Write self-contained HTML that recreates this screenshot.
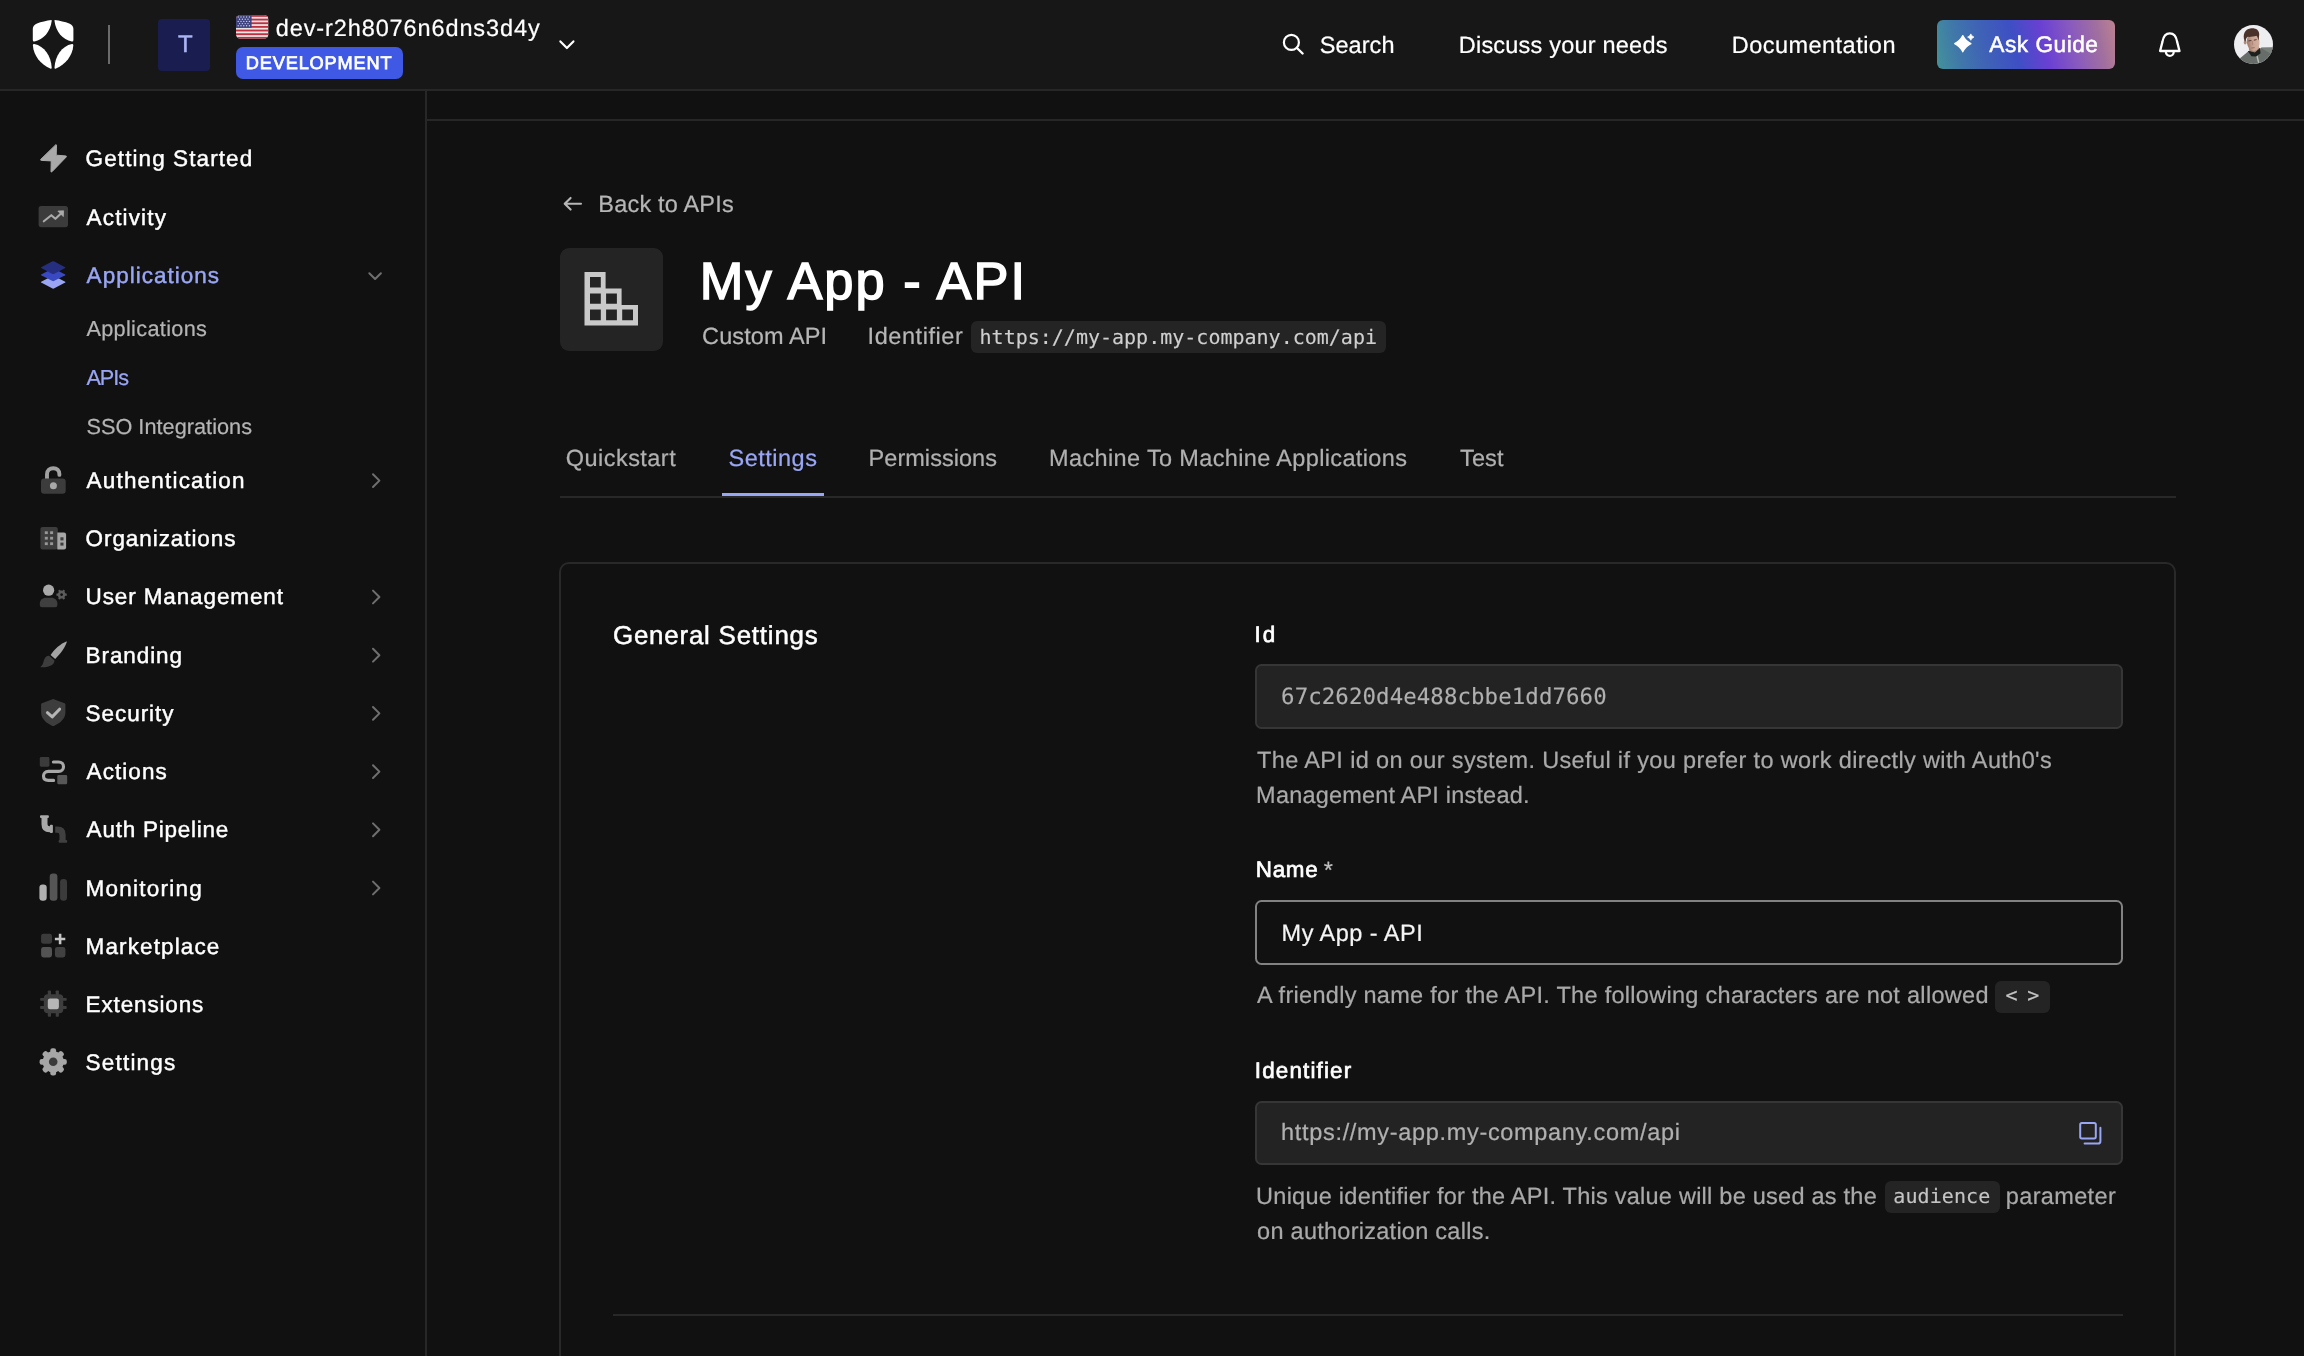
<!DOCTYPE html>
<html lang="en">
<head>
<meta charset="utf-8">
<title>My App - API</title>
<style>
*{box-sizing:border-box;margin:0;padding:0}
html,body{width:2304px;height:1356px;overflow:hidden;background:#111111;color:#fff;font-family:"Liberation Sans",sans-serif}
body{position:relative}
.b{position:absolute}
.t{position:absolute;white-space:nowrap}
svg{position:absolute;overflow:visible}
#hdr{left:0;top:0;width:2304px;height:89px;background:#171717}
#hdrline{left:0;top:89px;width:2304px;height:2px;background:#272727}
#sideline{left:425px;top:91px;width:2px;height:1265px;background:#272727}
#subline{left:427px;top:119px;width:1877px;height:2px;background:#272727}
.chip{background:#242424;border-radius:6px}
.inp{left:1255px;width:868px;height:65px;border-radius:6.5px}
.dis{background:#232323;border:2px solid #363636}
</style>
</head>
<body>
<!-- header -->
<div class="b" id="hdr"></div>
<div class="b" id="hdrline"></div>
<div class="b" id="sideline"></div>
<div class="b" id="subline"></div>

<!-- logo -->
<svg style="left:0;top:0" width="120" height="89" viewBox="0 0 120 89">
 <g fill="#ffffff">
  <path d="M51.6 19.9 C46.5 20.5 41 21.8 37 23.4 Q32.8 25.2 32.8 28.8 L32.8 40 Q32.8 41.8 34.4 41.5 C43.5 39.9 50.3 32 51.7 21.1 Z"/>
  <path d="M54.6 19.9 C59.7 20.5 65.2 21.8 69.2 23.4 Q73.4 25.2 73.4 28.8 L73.4 40 Q73.4 41.8 71.8 41.5 C62.7 39.9 55.9 32 54.5 21.1 Z"/>
  <path d="M34.2 44 Q32.8 43.8 32.9 45.4 C33.6 55.4 40.5 64 50.2 68.6 Q51.8 69.3 51.7 67.4 C51 56 44.5 46 34.2 44 Z"/>
  <path d="M72 44 Q73.4 43.8 73.3 45.4 C72.6 55.4 65.7 64 56 68.6 Q54.4 69.3 54.5 67.4 C55.2 56 61.7 46 72 44 Z"/>
 </g>
</svg>
<div class="b" style="left:108px;top:25px;width:2px;height:39px;background:#6b6b6b"></div>
<div class="b" style="left:158px;top:18.5px;width:52px;height:52px;border-radius:4px;background:#191d50"></div>
<!-- flag -->
<svg style="left:236px;top:15px" width="32.5" height="23.75" viewBox="0 0 32.5 23.75">
 <defs><clipPath id="fc"><rect x="0" y="0" width="32.5" height="23.75" rx="4.5"/></clipPath></defs>
 <g clip-path="url(#fc)">
  <rect width="32.5" height="23.75" fill="#e6e3e3"/>
  <g fill="#c02f40">
   <rect y="0" width="32.5" height="1.83"/><rect y="3.65" width="32.5" height="1.83"/><rect y="7.3" width="32.5" height="1.83"/>
   <rect y="10.96" width="32.5" height="1.83"/><rect y="14.6" width="32.5" height="1.83"/><rect y="18.27" width="32.5" height="1.83"/><rect y="21.92" width="32.5" height="1.83"/>
  </g>
  <rect width="15.6" height="12.8" fill="#40447f"/>
  <g fill="#c9cbe0">
   <circle cx="2.2" cy="2" r=".7"/><circle cx="5" cy="2" r=".7"/><circle cx="7.8" cy="2" r=".7"/><circle cx="10.6" cy="2" r=".7"/><circle cx="13.4" cy="2" r=".7"/>
   <circle cx="3.6" cy="4.2" r=".7"/><circle cx="6.4" cy="4.2" r=".7"/><circle cx="9.2" cy="4.2" r=".7"/><circle cx="12" cy="4.2" r=".7"/>
   <circle cx="2.2" cy="6.4" r=".7"/><circle cx="5" cy="6.4" r=".7"/><circle cx="7.8" cy="6.4" r=".7"/><circle cx="10.6" cy="6.4" r=".7"/><circle cx="13.4" cy="6.4" r=".7"/>
   <circle cx="3.6" cy="8.6" r=".7"/><circle cx="6.4" cy="8.6" r=".7"/><circle cx="9.2" cy="8.6" r=".7"/><circle cx="12" cy="8.6" r=".7"/>
   <circle cx="2.2" cy="10.8" r=".7"/><circle cx="5" cy="10.8" r=".7"/><circle cx="7.8" cy="10.8" r=".7"/><circle cx="10.6" cy="10.8" r=".7"/><circle cx="13.4" cy="10.8" r=".7"/>
  </g>
 </g>
</svg>
<div class="b" style="left:236px;top:47px;width:167.4px;height:32px;border-radius:7px;background:#3f59e4"></div>
<svg style="left:557px;top:38px" width="20" height="14" viewBox="557 38 20 14"><path d="M560.4 41.4 L566.9 48 L573.4 41.4" fill="none" stroke="#fff" stroke-width="2.2" stroke-linecap="round" stroke-linejoin="round"/></svg>
<!-- search icon -->
<svg style="left:1280px;top:31px" width="26" height="26" viewBox="1280 31 26 26"><circle cx="1291.4" cy="42.4" r="7.5" fill="none" stroke="#fff" stroke-width="2.2"/><path d="M1297 48 L1302.6 53.5" stroke="#fff" stroke-width="2.4" stroke-linecap="round"/></svg>
<!-- ask guide -->
<div class="b" style="left:1937px;top:20px;width:178px;height:49px;border-radius:6px;background:linear-gradient(78deg,#43939a 0%,#4078a9 13%,#3f62b6 27%,#3e4fc4 44%,#6a40d3 60%,#8a5bbd 76%,#a2709d 90%,#bd8390 100%)"></div>
<svg style="left:1950px;top:30px" width="28" height="26" viewBox="1950 30 28 26"><path d="M1962.8 35.6 Q1965.5 41.0 1970.8999999999999 43.7 Q1965.5 46.400000000000006 1962.8 51.800000000000004 Q1960.1 46.400000000000006 1954.7 43.7 Q1960.1 41.0 1962.8 35.6 Z" fill="#fff" stroke="#fff" stroke-width="1.3" stroke-linejoin="round"/><path d="M1970.8 33.9 Q1971.6 36.300000000000004 1974.0 37.1 Q1971.6 37.9 1970.8 40.300000000000004 Q1970.0 37.9 1967.6 37.1 Q1970.0 36.300000000000004 1970.8 33.9 Z" fill="#fff" stroke="#fff" stroke-width=".7" stroke-linejoin="round"/></svg>
<!-- bell -->
<svg style="left:2154px;top:28px" width="32" height="32" viewBox="2154 28 32 32"><path d="M2160.1 51 L2162.5 41.6 C2163.4 36.4 2166 33.4 2169.8 33.4 C2173.6 33.4 2176.2 36.4 2177.1 41.6 L2179.5 51 Z" fill="none" stroke="#fff" stroke-width="2.3" stroke-linejoin="round"/><path d="M2165.9 51.9 A3.9 3.9 0 0 0 2173.7 51.9" fill="none" stroke="#fff" stroke-width="2.2"/></svg>
<!-- avatar -->
<svg style="left:2234.4px;top:24.8px" width="39" height="39" viewBox="0 0 39 39">
 <defs><clipPath id="av"><circle cx="19.5" cy="19.5" r="19.5"/></clipPath>
 <linearGradient id="fg" x1="0" y1="0" x2="1" y2="0"><stop offset="0" stop-color="#9c7768"/><stop offset=".45" stop-color="#c9a392"/><stop offset="1" stop-color="#d3b0a0"/></linearGradient></defs>
 <g clip-path="url(#av)">
  <rect width="39" height="39" fill="#eeedf0"/>
  <path d="M4.5 34.5 L15 25.8 L21 27.5 L27.5 22.6 L39 22.4 V39 H4 Z" fill="#676d68"/>
  <path d="M27 23 L39 22.4 V30 Z" fill="#7a807b"/>
  <path d="M13.8 26 L17.4 31.2 L22.2 31.6 L26.6 28.2 L25.8 22.8 L21.4 26.6 Z" fill="#1d211e"/>
  <path d="M22.4 31.4 L24 38 L25.4 37.6 L23.6 30.6 Z" fill="#b9beb9"/>
  <path d="M14.2 19 L15.2 25.8 L20.8 27.6 L24.8 24 L24.6 18 Z" fill="#a47e6f"/>
  <ellipse cx="19.2" cy="17" rx="6.3" ry="9" transform="rotate(-8 19.2 17)" fill="url(#fg)"/>
  <ellipse cx="11.2" cy="17.2" rx="1.4" ry="2.2" fill="#b28a7b"/>
  <path d="M10.6 16 C8.2 9 11.2 4.4 16.2 3.5 C20.8 2.6 25.4 4.6 25.2 9.4 C25.1 11.6 24.6 13 24.9 15.4 C23.6 13.4 23.6 11.6 22.4 10.8 C19.8 11.4 16 12.2 13.8 11.8 C12.4 12.6 11.8 14.2 11.6 16.6 Z" fill="#4a312a"/>
  <path d="M14.4 15.9 L17.4 15.5 M19.8 15.2 L22.6 14.6" stroke="#5a3d33" stroke-width="1"/>
  <path d="M17.4 23 L20.6 22.6" stroke="#8f6557" stroke-width=".8"/>
  <path d="M18.2 16 L18.8 20.2" stroke="#a98070" stroke-width=".9"/>
 </g>
</svg>

<!--SIDE_START-->
<!-- sidebar icons: one svg in page coordinates -->
<svg style="left:0;top:91px" width="425" height="1100" viewBox="0 91 425 1100">
 <!-- getting started bolt -->
 <path d="M55.6 144.9 L40.7 159.4 Q40.3 160.3 41.4 160.4 L51.2 160.9 L51 171.6 Q51.2 172.5 52 171.7 L66.3 156.9 Q66.8 156 65.7 155.9 L56.2 155.2 L56.5 145.2 Q56.3 144.3 55.6 144.9 Z" fill="#a9a9a9" stroke="#a9a9a9" stroke-width="1" stroke-linejoin="round"/>
 <!-- activity -->
 <rect x="38.6" y="205.9" width="29.4" height="21.3" rx="2.6" fill="#3b3b3b"/>
 <path d="M43.8 221.3 L51.3 215.2 L55.4 218.8 L61.6 213" fill="none" stroke="#ababab" stroke-width="2.1" stroke-linecap="round" stroke-linejoin="round"/>
 <path d="M57.9 211.1 L63.6 210.8 L63.3 216.6 Z" fill="#ababab" stroke="#ababab" stroke-width=".8" stroke-linejoin="round"/>
 <!-- applications (stack) -->
 <path d="M53.2 275.6 L65.2 281.8 Q65.9 282.2 65.2 282.6 L53.9 288.5 Q53.2 288.8 52.5 288.5 L41.2 282.6 Q40.5 282.2 41.2 281.8 Z" fill="#9aa6f3"/>
 <path d="M53.2 268.2 L65.2 274.4 Q65.9 274.8 65.2 275.2 L53.9 281.1 Q53.2 281.4 52.5 281.1 L41.2 275.2 Q40.5 274.8 41.2 274.4 Z" fill="#3949c1"/>
 <path d="M52.5 261.3 Q53.2 261 53.9 261.3 L65.2 267.2 Q65.9 267.6 65.2 268 L53.9 273.9 Q53.2 274.2 52.5 273.9 L41.2 268 Q40.5 267.6 41.2 267.2 Z" fill="#252e7f"/>
 <path d="M369.3 273.3 L375.1 279 L380.9 273.3" fill="none" stroke="#6f6f6f" stroke-width="2" stroke-linecap="round" stroke-linejoin="round"/>
 <!-- authentication lock -->
 <path d="M47 480 V474.3 C47 470.3 49.8 468.2 53.3 468.2 C56.8 468.2 59.4 470.3 59.4 474.3 V474.9" fill="none" stroke="#a1a1a1" stroke-width="3.9" stroke-linecap="round"/>
 <rect x="41" y="478.5" width="24.7" height="15.3" rx="3" fill="#3c3c3c"/>
 <circle cx="53.4" cy="485.8" r="3.5" fill="#a8a8a8"/>
 <!-- organizations -->
 <rect x="40.4" y="526.9" width="17.4" height="22.6" rx="2.2" fill="#3d3d3d"/>
 <g fill="#979797">
  <rect x="44.8" y="531.3" width="3" height="2.8"/><rect x="50.1" y="531.3" width="3" height="2.8"/>
  <rect x="44.8" y="536.8" width="3" height="2.8"/><rect x="50.1" y="536.8" width="3" height="2.8"/>
  <rect x="44.8" y="542.3" width="3" height="2.8"/><rect x="50.1" y="542.3" width="3" height="2.8"/>
 </g>
 <path d="M57.3 532.6 H64 Q66.1 532.6 66.1 534.7 V547.4 Q66.1 549.5 64 549.5 H57.3 Z" fill="#a6a6a6"/>
 <rect x="60.4" y="537.3" width="3.1" height="3.1" fill="#3d3d3d"/><rect x="60.4" y="542.6" width="3.1" height="3" fill="#3d3d3d"/>
 <!-- user management -->
 <circle cx="48.6" cy="590.2" r="5.6" fill="#a9a9a9"/>
 <path d="M39.8 604 C39.8 600 42.5 597.8 46 597.8 H51.2 C54.7 597.8 57.4 600 57.4 604 V605 Q57.4 607.2 55.2 607.2 H42 Q39.8 607.2 39.8 605 Z" fill="#3f3f3f"/>
 <g transform="translate(61.6 594.6) rotate(30)" fill="#5c5c5c"><circle r="3.8"/><g id="gt"><rect x="-1.1" y="-5.2" width="2.2" height="10.4" rx=".5"/></g><use href="#gt" transform="rotate(60)"/><use href="#gt" transform="rotate(120)"/><circle r="1.4" fill="#111111"/></g>
 <!-- branding brush -->
 <path d="M66.3 641.5 Q67.1 641.2 66.8 642.1 C65.2 647.2 60.2 654.5 55.2 658.9 L50.6 655 C54.2 649.4 61 643.4 66.3 641.5 Z" fill="#a4a4a4"/>
 <path d="M49.2 655.8 L54.4 660.3 C54.8 664.5 50 667.6 41 667.3 Q40 667.2 40.8 666.5 C44 664.4 43.2 659.2 46 656.8 Q47.5 655.5 49.2 655.8 Z" fill="#3d3d3d"/>
 <!-- security -->
 <path d="M53.2 699.1 L64.6 703.3 Q65.4 703.6 65.4 704.5 V712.5 C65.4 718.8 60 723.3 53.9 725.9 Q53.2 726.2 52.5 725.9 C46.4 723.3 41.1 718.8 41.1 712.5 V704.5 Q41.1 703.6 41.9 703.3 Z" fill="#3d3d3d"/>
 <path d="M47.4 712.7 L52.2 716.9 L59.6 709.2" fill="none" stroke="#b6b6b6" stroke-width="3" stroke-linecap="round" stroke-linejoin="round"/>
 <!-- actions -->
 <rect x="39.8" y="757" width="9.6" height="9.7" rx="1.4" fill="#3b3b3b"/>
 <rect x="57.3" y="775" width="9.9" height="9.3" rx="1.4" fill="#575757"/>
 <path d="M53.4 762 H58.6 C61.8 762 63.5 764.1 63.5 766.7 C63.5 769.3 61.8 771.4 58.6 771.4 H48.4 C45.2 771.4 43.5 773.5 43.5 776.1 C43.5 778.7 45.2 780.4 48.4 780.4 H53.6" fill="none" stroke="#a8a8a8" stroke-width="3.1" stroke-linecap="round"/>
 <!-- auth pipeline -->
 <path d="M44.5 817 V824.2 Q44.5 829.3 49.6 829.3 H51" fill="none" stroke="#a9a9a9" stroke-width="6"/>
 <rect x="40" y="815.2" width="8.9" height="2.9" rx="1" fill="#a9a9a9"/>
 <rect x="49.9" y="824.8" width="3" height="8.2" rx="1" fill="#a9a9a9"/>
 <path d="M55.2 829.7 H57.4 Q62.55 829.7 62.55 834.9 V840.6" fill="none" stroke="#404040" stroke-width="6.2"/>
 <rect x="58.6" y="840" width="8.6" height="2.7" rx="1" fill="#404040"/>
 <!-- monitoring -->
 <rect x="39.4" y="884.4" width="7.3" height="16.4" rx="3.2" fill="#b1b1b1"/>
 <rect x="49.7" y="873.5" width="7.7" height="27.3" rx="3.2" fill="#555555"/>
 <rect x="60.1" y="879" width="6.9" height="21.8" rx="3.2" fill="#3b3b3b"/>
 <!-- marketplace -->
 <rect x="41.1" y="933.7" width="10.9" height="10.1" rx="2.4" fill="#3b3b3b"/>
 <rect x="41.1" y="947.1" width="10.9" height="10.4" rx="2.4" fill="#535353"/>
 <rect x="54.9" y="947.1" width="10.5" height="10.4" rx="2.4" fill="#414141"/>
 <path d="M54.9 939 H65.3 M60.1 933.8 V944.2" stroke="#c6c6c6" stroke-width="2.6"/>
 <!-- extensions -->
 <g fill="#3e3e3e">
  <rect x="43.8" y="994.2" width="19.5" height="19" rx="4"/>
  <rect x="47.8" y="990.4" width="3.2" height="26.4" rx=".8"/><rect x="55.7" y="990.4" width="3.2" height="26.4" rx=".8"/>
  <rect x="40.1" y="997.9" width="26.6" height="2.9" rx=".8"/><rect x="40.1" y="1006" width="26.6" height="3" rx=".8"/>
 </g>
 <rect x="47.8" y="998.5" width="11.1" height="10.7" rx="2.2" fill="#b6b6b6"/>
 <!-- settings gear -->
 <g transform="translate(53.2 1061.8)"><g fill="#a6a6a6"><circle r="10.6"/><g id="st"><rect x="-2.9" y="-13.6" width="5.8" height="27.2" rx="2.2"/></g><use href="#st" transform="rotate(45)"/><use href="#st" transform="rotate(90)"/><use href="#st" transform="rotate(135)"/></g><circle r="4.3" fill="#3a3a3a"/></g>
 <!-- chevrons right -->
 <g fill="none" stroke="#6f6f6f" stroke-width="2" stroke-linecap="round" stroke-linejoin="round">
  <path id="cr" d="M373 474.2 L379.4 480.6 L373 487"/>
  <use href="#cr" y="116.4"/><use href="#cr" y="174.6"/><use href="#cr" y="232.8"/><use href="#cr" y="291"/><use href="#cr" y="349.2"/><use href="#cr" y="407.4"/>
 </g>
</svg>
<!--SIDE_END-->
<!--MAIN_START-->
<!-- main -->
<svg style="left:560px;top:194px" width="26" height="20" viewBox="560 194 26 20"><path d="M581 203.75 L565 203.75 M570.6 197.9 L564.7 203.75 L570.6 209.6" fill="none" stroke="#b6b6b6" stroke-width="2.1" stroke-linecap="round" stroke-linejoin="round"/></svg>
<div class="b" style="left:559.5px;top:247.5px;width:103.5px;height:103px;border-radius:9px;background:#242424"></div>
<svg style="left:580px;top:268px" width="62" height="62" viewBox="580 268 62 62"><path fill="#c9c9c9" fill-rule="evenodd" d="M584.5 272 H605.6 V288.6 H621.6 V304.9 H638 V325.5 H584.5 Z M590 277 V287.4 H600.8 V277 Z M590 293.4 V303.8 H600.8 V293.4 Z M606.1 293.4 V303.8 H616.9 V293.4 Z M590 309.6 V320.2 H600.8 V309.6 Z M606.1 309.6 V320.2 H616.9 V309.6 Z M622.2 309.6 V320.2 H633 V309.6 Z"/></svg>
<div class="b chip" style="left:970.5px;top:321.25px;width:415.5px;height:31.75px"></div>
<div class="b" style="left:559.5px;top:496px;width:1616.5px;height:2px;background:#282828"></div>
<div class="b" style="left:722px;top:493px;width:101.75px;height:3.2px;background:#99a6f4"></div>
<div class="b" style="left:559px;top:562px;width:1617px;height:830px;border:2px solid #292929;border-radius:10px"></div>
<div class="b inp dis" style="top:664px"></div>
<div class="b inp" style="top:900px;border:2px solid #828282;background:#111111"></div>
<div class="b inp dis" style="top:1101px;height:64px"></div>
<div class="b chip" style="left:1995px;top:980.5px;width:55px;height:32px"></div>
<div class="b chip" style="left:1884.75px;top:1180.75px;width:115px;height:31.75px"></div>
<svg style="left:2076px;top:1119px" width="30" height="30" viewBox="2076 1119 30 30"><rect x="2080.2" y="1123" width="15.6" height="15.4" rx="1.6" fill="none" stroke="#99a6f4" stroke-width="2"/><path d="M2100.4 1127.8 V1141.2 Q2100.4 1143.6 2098 1143.6 H2084.6" fill="none" stroke="#99a6f4" stroke-width="2" stroke-linecap="round"/></svg>
<div class="b" style="left:613px;top:1314px;width:1509.5px;height:2px;background:#282828"></div>
<!--MAIN_END-->
<div id="tx" style="position:absolute;left:0;top:0;width:2304px;height:1356px;will-change:transform;text-rendering:geometricPrecision">
<div class="t" style='left:178.00px;top:31px;font-size:24px;line-height:27px;color:#abb4f5;letter-spacing:0.000px;-webkit-text-stroke:0.5px #abb4f5'>T</div>
<div class="t" style='left:275.81px;top:15px;font-size:23.5px;line-height:26px;color:#ffffff;letter-spacing:0.889px;-webkit-text-stroke:0.22px #ffffff'>dev-r2h8076n6dns3d4y</div>
<div class="t" style='left:245.78px;top:53px;font-size:18.2px;line-height:20px;color:#ffffff;letter-spacing:0.841px;-webkit-text-stroke:0.75px #ffffff'>DEVELOPMENT</div>
<div class="t" style='left:1319.81px;top:32px;font-size:23.5px;line-height:26px;color:#ffffff;letter-spacing:0.038px;-webkit-text-stroke:0.22px #ffffff'>Search</div>
<div class="t" style='left:1458.81px;top:32px;font-size:23.5px;line-height:26px;color:#ffffff;letter-spacing:0.210px;-webkit-text-stroke:0.22px #ffffff'>Discuss your needs</div>
<div class="t" style='left:1731.71px;top:32px;font-size:23.5px;line-height:26px;color:#ffffff;letter-spacing:0.474px;-webkit-text-stroke:0.22px #ffffff'>Documentation</div>
<div class="t" style='left:1989.25px;top:31px;font-size:22.7px;line-height:26px;color:#ffffff;letter-spacing:0.507px;-webkit-text-stroke:0.5px #ffffff'>Ask Guide</div>
<div class="t" style='left:85.62px;top:146px;font-size:22.5px;line-height:25px;color:#ffffff;letter-spacing:1.088px;-webkit-text-stroke:0.45px #ffffff'>Getting Started</div>
<div class="t" style='left:86.62px;top:205px;font-size:22.5px;line-height:25px;color:#ffffff;letter-spacing:1.149px;-webkit-text-stroke:0.45px #ffffff'>Activity</div>
<div class="t" style='left:86.62px;top:263px;font-size:22.5px;line-height:25px;color:#99a6f4;letter-spacing:1.016px;-webkit-text-stroke:0.45px #99a6f4'>Applications</div>
<div class="t" style='left:86.62px;top:468px;font-size:22.5px;line-height:25px;color:#ffffff;letter-spacing:1.182px;-webkit-text-stroke:0.45px #ffffff'>Authentication</div>
<div class="t" style='left:85.62px;top:526px;font-size:22.5px;line-height:25px;color:#ffffff;letter-spacing:0.915px;-webkit-text-stroke:0.45px #ffffff'>Organizations</div>
<div class="t" style='left:85.62px;top:584px;font-size:22.5px;line-height:25px;color:#ffffff;letter-spacing:0.872px;-webkit-text-stroke:0.45px #ffffff'>User Management</div>
<div class="t" style='left:85.62px;top:643px;font-size:22.5px;line-height:25px;color:#ffffff;letter-spacing:0.900px;-webkit-text-stroke:0.45px #ffffff'>Branding</div>
<div class="t" style='left:85.62px;top:701px;font-size:22.5px;line-height:25px;color:#ffffff;letter-spacing:0.946px;-webkit-text-stroke:0.45px #ffffff'>Security</div>
<div class="t" style='left:86.62px;top:759px;font-size:22.5px;line-height:25px;color:#ffffff;letter-spacing:1.053px;-webkit-text-stroke:0.45px #ffffff'>Actions</div>
<div class="t" style='left:86.62px;top:817px;font-size:22.5px;line-height:25px;color:#ffffff;letter-spacing:0.764px;-webkit-text-stroke:0.45px #ffffff'>Auth Pipeline</div>
<div class="t" style='left:85.62px;top:876px;font-size:22.5px;line-height:25px;color:#ffffff;letter-spacing:1.235px;-webkit-text-stroke:0.45px #ffffff'>Monitoring</div>
<div class="t" style='left:85.62px;top:934px;font-size:22.5px;line-height:25px;color:#ffffff;letter-spacing:1.121px;-webkit-text-stroke:0.45px #ffffff'>Marketplace</div>
<div class="t" style='left:85.62px;top:992px;font-size:22.5px;line-height:25px;color:#ffffff;letter-spacing:0.849px;-webkit-text-stroke:0.45px #ffffff'>Extensions</div>
<div class="t" style='left:85.62px;top:1050px;font-size:22.5px;line-height:25px;color:#ffffff;letter-spacing:1.186px;-webkit-text-stroke:0.45px #ffffff'>Settings</div>
<div class="t" style='left:86.41px;top:316px;font-size:21.7px;line-height:25px;color:#b4b4b4;letter-spacing:0.326px;-webkit-text-stroke:0.22px #b4b4b4'>Applications</div>
<div class="t" style='left:86.41px;top:365px;font-size:21.7px;line-height:25px;color:#99a6f4;letter-spacing:-1.025px;-webkit-text-stroke:0.22px #99a6f4'>APIs</div>
<div class="t" style='left:86.41px;top:414px;font-size:21.7px;line-height:25px;color:#b4b4b4;letter-spacing:0.031px;-webkit-text-stroke:0.22px #b4b4b4'>SSO Integrations</div>
<div class="t" style='left:598.36px;top:191px;font-size:23.5px;line-height:26px;color:#b6b6b6;letter-spacing:0.186px;-webkit-text-stroke:0.22px #b6b6b6'>Back to APIs</div>
<div class="t" style='left:699.75px;top:253px;font-size:52.4px;line-height:58px;color:#ffffff;letter-spacing:2.043px;-webkit-text-stroke:1.5px #ffffff'>My App - API</div>
<div class="t" style='left:702.11px;top:323px;font-size:23.5px;line-height:26px;color:#b6b6b6;letter-spacing:0.082px;-webkit-text-stroke:0.22px #b6b6b6'>Custom API</div>
<div class="t" style='left:867.61px;top:323px;font-size:23.5px;line-height:26px;color:#b6b6b6;letter-spacing:0.553px;-webkit-text-stroke:0.22px #b6b6b6'>Identifier</div>
<div class="t" style='left:979.58px;top:325px;font-size:20px;line-height:24px;color:#cfcfcf;letter-spacing:0.001px;font-family:"DejaVu Sans Mono", "Liberation Mono", monospace;-webkit-text-stroke:0.15px #cfcfcf'>https://my-app.my-company.com/api</div>
<div class="t" style='left:565.86px;top:445px;font-size:23.5px;line-height:26px;color:#b0b0b0;letter-spacing:0.448px;-webkit-text-stroke:0.22px #b0b0b0'>Quickstart</div>
<div class="t" style='left:728.61px;top:445px;font-size:23.5px;line-height:26px;color:#99a6f4;letter-spacing:0.481px;-webkit-text-stroke:0.22px #99a6f4'>Settings</div>
<div class="t" style='left:868.61px;top:445px;font-size:23.5px;line-height:26px;color:#b0b0b0;letter-spacing:0.030px;-webkit-text-stroke:0.22px #b0b0b0'>Permissions</div>
<div class="t" style='left:1049.11px;top:445px;font-size:23.5px;line-height:26px;color:#b0b0b0;letter-spacing:0.358px;-webkit-text-stroke:0.22px #b0b0b0'>Machine To Machine Applications</div>
<div class="t" style='left:1460.11px;top:445px;font-size:23.5px;line-height:26px;color:#b0b0b0;letter-spacing:0.070px;-webkit-text-stroke:0.22px #b0b0b0'>Test</div>
<div class="t" style='left:613.00px;top:622px;font-size:25.9px;line-height:28px;color:#ffffff;letter-spacing:0.790px;-webkit-text-stroke:0.5px #ffffff'>General Settings</div>
<div class="t" style='left:1254.60px;top:622px;font-size:22.4px;line-height:25px;color:#ffffff;letter-spacing:1.829px;-webkit-text-stroke:0.7px #ffffff'>Id</div>
<div class="t" style='left:1281.08px;top:684px;font-size:22.4px;line-height:26px;color:#b0b0b0;letter-spacing:0.089px;font-family:"DejaVu Sans Mono", "Liberation Mono", monospace;-webkit-text-stroke:0.15px #b0b0b0'>67c2620d4e488cbbe1dd7660</div>
<div class="t" style='left:1257.11px;top:747px;font-size:23.5px;line-height:26px;color:#a9a9a9;letter-spacing:0.364px;-webkit-text-stroke:0.22px #a9a9a9'>The API id on our system. Useful if you prefer to work directly with Auth0's</div>
<div class="t" style='left:1256.11px;top:782px;font-size:23.5px;line-height:26px;color:#a9a9a9;letter-spacing:0.191px;-webkit-text-stroke:0.22px #a9a9a9'>Management API instead.</div>
<div class="t" style='left:1255.85px;top:857px;font-size:22.4px;line-height:25px;color:#ffffff;letter-spacing:0.675px;-webkit-text-stroke:0.7px #ffffff'>Name</div>
<div class="t" style='left:1323.86px;top:857px;font-size:23.5px;line-height:26px;color:#c0c0c0;letter-spacing:0.000px;-webkit-text-stroke:0.22px #c0c0c0'>*</div>
<div class="t" style='left:1281.61px;top:920px;font-size:23.5px;line-height:26px;color:#f5f5f5;letter-spacing:0.475px;-webkit-text-stroke:0.22px #f5f5f5'>My App - API</div>
<div class="t" style='left:1257.11px;top:982px;font-size:23.5px;line-height:26px;color:#a9a9a9;letter-spacing:0.292px;-webkit-text-stroke:0.22px #a9a9a9'>A friendly name for the API. The following characters are not allowed</div>
<div class="t" style='left:2005.58px;top:983px;font-size:20px;line-height:24px;color:#c4c4c4;letter-spacing:-1.241px;font-family:"DejaVu Sans Mono", "Liberation Mono", monospace;-webkit-text-stroke:0.15px #c4c4c4'>&lt; &gt;</div>
<div class="t" style='left:1254.85px;top:1058px;font-size:22.4px;line-height:25px;color:#ffffff;letter-spacing:1.153px;-webkit-text-stroke:0.7px #ffffff'>Identifier</div>
<div class="t" style='left:1281.11px;top:1119px;font-size:23.5px;line-height:26px;color:#b0b0b0;letter-spacing:0.680px;-webkit-text-stroke:0.22px #b0b0b0'>https://my-app.my-company.com/api</div>
<div class="t" style='left:1256.11px;top:1183px;font-size:23.5px;line-height:26px;color:#a9a9a9;letter-spacing:0.249px;-webkit-text-stroke:0.22px #a9a9a9'>Unique identifier for the API. This value will be used as the</div>
<div class="t" style='left:1893.33px;top:1184px;font-size:20px;line-height:24px;color:#c4c4c4;letter-spacing:0.080px;font-family:"DejaVu Sans Mono", "Liberation Mono", monospace;-webkit-text-stroke:0.15px #c4c4c4'>audience</div>
<div class="t" style='left:2005.86px;top:1183px;font-size:23.5px;line-height:26px;color:#a9a9a9;letter-spacing:0.344px;-webkit-text-stroke:0.22px #a9a9a9'>parameter</div>
<div class="t" style='left:1257.11px;top:1218px;font-size:23.5px;line-height:26px;color:#a9a9a9;letter-spacing:0.262px;-webkit-text-stroke:0.22px #a9a9a9'>on authorization calls.</div>
</div>
</body>
</html>
